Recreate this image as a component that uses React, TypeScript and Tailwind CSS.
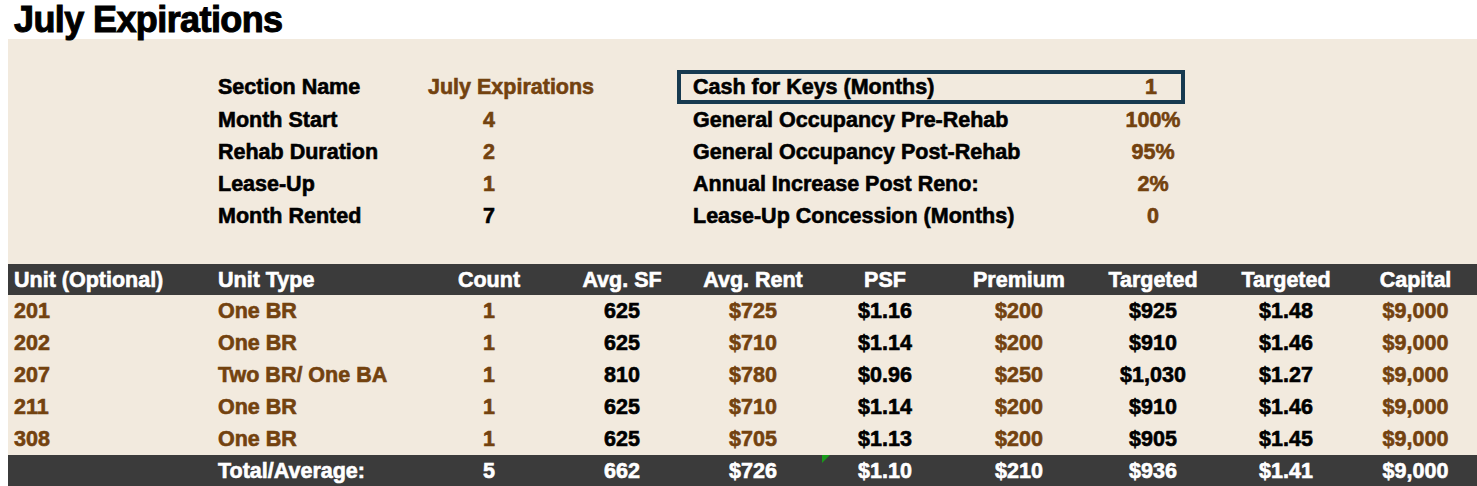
import React from "react";

const B = "text-[#73420f]";
const K = "text-black";

type Cell = { v: string; c: string };

const cols = [
  { w: "w-[202px]", align: "justify-start pl-[6px]" },
  { w: "w-[210px]", align: "justify-start pl-[8px]" },
  { w: "w-[138px]", align: "justify-center" },
  { w: "w-[128px]", align: "justify-center" },
  { w: "w-[134px]", align: "justify-center" },
  { w: "w-[130px]", align: "justify-center" },
  { w: "w-[138px]", align: "justify-center" },
  { w: "w-[130px]", align: "justify-center" },
  { w: "w-[136px]", align: "justify-center" },
  { w: "w-[123px]", align: "justify-center" },
];

const headers = [
  "Unit (Optional)",
  "Unit Type",
  "Count",
  "Avg. SF",
  "Avg. Rent",
  "PSF",
  "Premium",
  "Targeted",
  "Targeted",
  "Capital",
];

const rowsData: string[][] = [
  ["201", "One BR", "1", "625", "$725", "$1.16", "$200", "$925", "$1.48", "$9,000"],
  ["202", "One BR", "1", "625", "$710", "$1.14", "$200", "$910", "$1.46", "$9,000"],
  ["207", "Two BR/ One BA", "1", "810", "$780", "$0.96", "$250", "$1,030", "$1.27", "$9,000"],
  ["211", "One BR", "1", "625", "$710", "$1.14", "$200", "$910", "$1.46", "$9,000"],
  ["308", "One BR", "1", "625", "$705", "$1.13", "$200", "$905", "$1.45", "$9,000"],
];

const colColors = [B, B, B, K, B, K, B, K, K, B];

const total = ["", "Total/Average:", "5", "662", "$726", "$1.10", "$210", "$936", "$1.41", "$9,000"];

function Row({ cells, h, extra }: { cells: Cell[]; h: string; extra?: string }) {
  return (
    <div className={`flex ${h} ${extra ?? ""}`}>
      {cells.map((cell, i) => (
        <div
          key={i}
          className={`${cols[i].w} ${cols[i].align} flex items-center pt-[2px] shrink-0 whitespace-nowrap ${cell.c}`}
        >
          {cell.v}
        </div>
      ))}
    </div>
  );
}

export default function App() {
  const font = { fontFamily: '"Liberation Sans", Arial, sans-serif' };
  const leftRows = [
    { l: "Section Name", v: "July Expirations", c: B, left: true },
    { l: "Month Start", v: "4", c: B },
    { l: "Rehab Duration", v: "2", c: B },
    { l: "Lease-Up", v: "1", c: B },
    { l: "Month Rented", v: "7", c: K },
  ];
  const rightRows = [
    { l: "General Occupancy Pre-Rehab", v: "100%" },
    { l: "General Occupancy Post-Rehab", v: "95%" },
    { l: "Annual Increase Post Reno:", v: "2%" },
    { l: "Lease-Up Concession (Months)", v: "0" },
  ];
  return (
    <div
      className="w-[1477px] bg-white font-bold [-webkit-text-stroke:0.6px_currentColor]"
      style={font}
    >
      <div className="h-[39px] pl-[14px] flex items-center text-[36px] leading-none text-black tracking-[-0.6px] [-webkit-text-stroke:1px_currentColor]">
        July Expirations
      </div>
      <div className="ml-[8px] bg-[#f2eade] text-[21.5px] leading-none">
        {/* info section */}
        <div className="h-[225px] pt-[31px] flex">
          <div className="ml-[202px] w-[348px] shrink-0 flex flex-col">
            {leftRows.map((r, i) => (
              <div key={i} className={`flex pt-[2px] ${i === 0 ? "h-[34px]" : "h-[32px]"}`}>
                <div className="w-[210px] pl-[8px] flex items-center text-black whitespace-nowrap">{r.l}</div>
                <div
                  className={`w-[138px] flex items-center whitespace-nowrap ${r.c} ${
                    r.left ? "justify-start pl-[8px]" : "justify-center"
                  }`}
                >
                  {r.v}
                </div>
              </div>
            ))}
          </div>
          <div className="ml-[119px] w-[508px] shrink-0 flex flex-col">
            <div className="flex h-[34px] pt-[2px] border-[4px] border-[#173a50]">
              <div className="w-[440px] pl-[12px] flex items-center text-black whitespace-nowrap">
                Cash for Keys (Months)
              </div>
              <div className={`w-[60px] flex items-center justify-center ${B}`}>1</div>
            </div>
            {rightRows.map((r, i) => (
              <div key={i} className="flex h-[32px] pt-[2px]">
                <div className="w-[444px] pl-[16px] flex items-center text-black whitespace-nowrap">{r.l}</div>
                <div className={`w-[64px] flex items-center justify-center whitespace-nowrap ${B}`}>{r.v}</div>
              </div>
            ))}
          </div>
        </div>
        {/* table */}
        <Row
          h="h-[31px]"
          extra="bg-[#3b3b3b]"
          cells={headers.map((v) => ({ v, c: "text-white" }))}
        />
        {rowsData.map((r, i) => (
          <Row key={i} h="h-[32px]" cells={r.map((v, j) => ({ v, c: colColors[j] }))} />
        ))}
        <div className="relative">
          <Row h="h-[31px]" extra="bg-[#3b3b3b]" cells={total.map((v) => ({ v, c: "text-white" }))} />
          <div className="absolute left-[814px] top-0 w-0 h-0 border-t-[8px] border-t-[#1a9a1a] border-r-[8px] border-r-transparent" />
        </div>
      </div>
    </div>
  );
}
